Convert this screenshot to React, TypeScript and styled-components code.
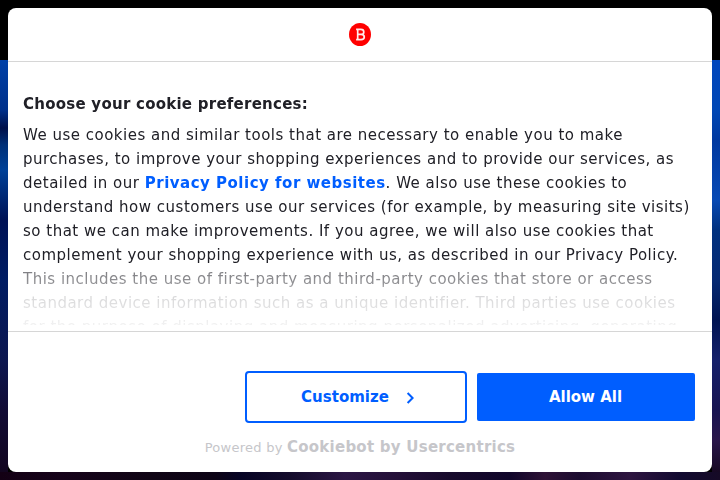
import React from "react";
import styled, { createGlobalStyle } from "styled-components";

const GlobalStyle = createGlobalStyle`
  * { box-sizing: border-box; }
  body { margin: 0; background: #000; }
`;

const Page = styled.div`
  width: 720px;
  height: 480px;
  padding: 8px;
  overflow: hidden;
  font-family: "DejaVu Sans", sans-serif;
  font-size: 15px;
  background:
    linear-gradient(90deg, #130014 0, #16031a 60px, #100515 150px, #0d0416 215px, #060324 240px, #140c2c 290px, #2b1644 345px, #241038 400px, #170a2c 450px, #10062a 510px, #2e1236 545px, #1c0c30 580px, #2e1540 630px, #120a30 680px, #160a26 720px) 0 472px / 720px 8px no-repeat,
    linear-gradient(180deg, #0041a8 0, #00308a 50px, #00104a 68px, #003078 85px, #004198 110px, #001255 160px, #001c63 220px, #0d1750 300px, #120c35 350px, #12051f 412px) 0 60px / 8px 412px no-repeat,
    linear-gradient(180deg, #0046bd 0, #0047b5 50px, #0039a0 80px, #0749b4 140px, #00317f 170px, #052972 220px, #001452 260px, #15206b 300px, #181452 350px, #2a164b 380px, #170923 412px) 712px 60px / 8px 412px no-repeat,
    #000;
`;

const Dialog = styled.div`
  display: flex;
  flex-direction: column;
  height: 464px;
  border-radius: 8px;
  overflow: hidden;
  background: #fff;
  color: #141414;
`;

const Header = styled.header`
  display: flex;
  justify-content: center;
  height: 54px;
  padding-top: 15px;
  border-bottom: 1px solid #d6d6d6;
`;

const Content = styled.main`
  height: 270px;
  padding: 30px 15px 0;
  border-bottom: 1px solid #d6d6d6;
`;

const Fade = styled.div`
  height: 233px;
  overflow: hidden;
  letter-spacing: 0.5px;
  line-height: 24px;
  color: #202027;
  mask-image: linear-gradient(180deg, #000 0 173px, rgba(0, 0, 0, 0.6) 176px, rgba(0, 0, 0, 0.48) 192px, rgba(0, 0, 0, 0.18) 201px, rgba(0, 0, 0, 0.14) 214px, rgba(0, 0, 0, 0.06) 233px);
`;

const Title = styled.h2`
  margin: 0 0 7px;
  font-size: 15px;
  line-height: 24px;
  letter-spacing: 0.25px;
`;

const Copy = styled.p`
  margin: 0;
  white-space: nowrap;
`;

const PolicyLink = styled.a`
  color: #005eff;
  font-weight: 700;
`;

const Actions = styled.div`
  display: flex;
  justify-content: flex-end;
  align-items: center;
  gap: 10px;
  margin-top: 39px;
  padding-right: 17px;
`;

const Button = styled.button<{ $primary?: boolean }>`
  display: flex;
  align-items: center;
  justify-content: center;
  width: ${(p) => (p.$primary ? 218 : 222)}px;
  height: ${(p) => (p.$primary ? 48 : 52)}px;
  padding: ${(p) => (p.$primary ? "0 1px 0 0" : "0 0 0 1px")};
  border: ${(p) => (p.$primary ? "0" : "2px solid #005eff")};
  border-radius: ${(p) => (p.$primary ? 2 : 4)}px;
  background: ${(p) => (p.$primary ? "#005eff" : "#fff")};
  color: ${(p) => (p.$primary ? "#fff" : "#005eff")};
  font: 700 15px "DejaVu Sans", sans-serif;
`;

const Chevron = styled.svg`
  margin: 2px -2px 0 17px;
`;

const Powered = styled.footer`
  margin-top: 14px;
  text-align: center;
  line-height: 20px;
  font-size: 13px;
  letter-spacing: 0.25px;
  color: #c6c6ca;
`;

const Brand = styled.strong`
  font-size: 15px;
`;

export default function App() {
  return (
    <Page>
      <GlobalStyle />
      <Dialog>
        <Header>
          <svg width="22" height="23" viewBox="0 0 22 23" aria-label="B">
            <ellipse cx="11" cy="11.5" rx="11" ry="11.5" fill="#f00" />
            <path d="M7.1 6.4h4.8c2 0 2.9 1 2.9 2.5s-.9 2.4-2.6 2.4H9M12 11.3c2.2 0 3.3 1.1 3.3 2.7s-1.1 2.6-3.2 2.6H7.1M8.7 6.4v10.2" fill="none" stroke="#fff" strokeOpacity="0.92" strokeWidth="1.7" />
          </svg>
        </Header>
        <Content>
          <Fade>
            <Title>Choose your cookie preferences:</Title>
            <Copy>
              We use cookies and similar tools that are necessary to enable you to make<br />
              purchases, to improve your shopping experiences and to provide our services, as<br />
              detailed in our <PolicyLink>Privacy Policy for websites</PolicyLink>. We also use these cookies to<br />
              understand how customers use our services (for example, by measuring site visits)<br />
              so that we can make improvements. If you agree, we will also use cookies that<br />
              complement your shopping experience with us, as described in our Privacy Policy.<br />
              This includes the use of first-party and third-party cookies that store or access<br />
              standard device information such as a unique identifier. Third parties use cookies<br />
              for the purpose of displaying and measuring personalized advertising, generating
            </Copy>
          </Fade>
        </Content>
        <Actions>
          <Button>
            Customize
            <Chevron width="8" height="12" viewBox="0 0 8 12">
              <path d="M1.6 1 6.6 6l-5 5" fill="none" stroke="#005eff" strokeWidth="2" />
            </Chevron>
          </Button>
          <Button $primary>Allow All</Button>
        </Actions>
        <Powered>
          Powered by <Brand>Cookiebot by Usercentrics</Brand>
        </Powered>
      </Dialog>
    </Page>
  );
}
